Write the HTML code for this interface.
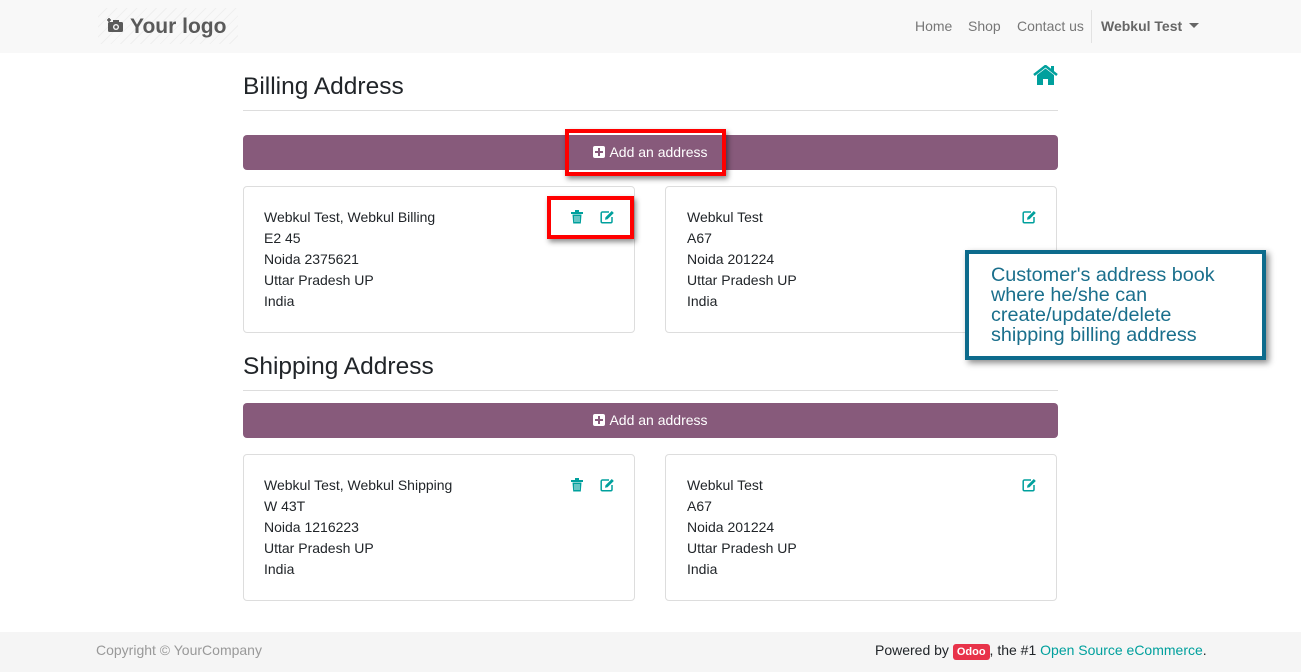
<!DOCTYPE html>
<html><head><meta charset="utf-8"><style>
*{box-sizing:border-box;margin:0;padding:0}
body{width:1301px;height:672px;background:#fff;font-family:"Liberation Sans",sans-serif;color:#212529;position:relative;overflow:hidden;font-size:14px}
.nav{position:absolute;left:0;top:0;width:1301px;height:53px;background:#f8f8f8}
.logo{position:absolute;left:98px;top:8px;width:140px;height:36px;background:repeating-linear-gradient(135deg,#f8f8f8 0 6px,#efefef 6px 7px)}
.logo span{position:absolute;left:32px;top:7px;font-size:21px;font-weight:bold;color:#5a5a5a}
.nav a{position:absolute;top:18px;font-size:14px;color:#777}
.sep{position:absolute;left:1091px;top:10px;width:1px;height:33px;background:#e2e2e2}
h2{position:absolute;left:243px;font-size:24.5px;font-weight:normal;color:#212529}
.hr{position:absolute;left:243px;width:815px;height:1px;background:#ddd}
.btn{position:absolute;left:243px;width:815px;height:35px;background:#875a7b;border-radius:4px;color:#fff;font-size:14px;text-align:center;line-height:35px}
.plus{display:inline-block;width:12px;height:12px;background:#fff;border-radius:2px;position:relative;vertical-align:-1px;margin-right:4px}
.plus:before{content:"";position:absolute;left:2px;top:5px;width:8px;height:2px;background:#875a7b}
.plus:after{content:"";position:absolute;left:5px;top:2px;width:2px;height:8px;background:#875a7b}
.card{position:absolute;width:392px;height:147px;border:1px solid #ddd;border-radius:4px;padding:20px 20px;line-height:21px;font-size:14px}
.ic{position:absolute;top:23px}
.red{position:absolute;border:4px solid #f00;box-shadow:2px 3px 5px rgba(0,0,0,.45)}
.note{position:absolute;left:965px;top:250px;width:301px;height:110px;border:4px solid #0d6b8c;background:#fff;box-shadow:3px 3px 6px rgba(0,0,0,.45);padding:11px 0 0 22px;color:#1a6f8c;font-size:19.8px;line-height:20px}
.note div{width:250px}
.foot{position:absolute;left:0;top:632px;width:1301px;height:40px;background:#f5f5f5}
</style></head><body>
<div class="nav">
<div class="logo"><svg style="position:absolute;left:8px;top:9px" width="18" height="16" viewBox="0 0 18 16"><path d="M3 1v4M1 3h4" stroke="#5a5a5a" stroke-width="1.6"/><rect x="2" y="5" width="15" height="10" rx="1.5" fill="#5a5a5a"/><rect x="7" y="3" width="6" height="3" fill="#5a5a5a"/><circle cx="10" cy="10" r="3" fill="#f8f8f8"/><circle cx="10" cy="10" r="1.6" fill="#5a5a5a"/></svg><span>Your logo</span></div>
<a style="left:915px">Home</a><a style="left:968px">Shop</a><a style="left:1017px">Contact us</a>
<div class="sep"></div>
<a style="left:1101px;font-weight:bold;color:#666">Webkul Test <span style="display:inline-block;border-left:5px solid transparent;border-right:5px solid transparent;border-top:5px solid #666;vertical-align:3px;margin-left:3px"></span></a>
</div>
<svg style="position:absolute;left:1033px;top:65px" width="25" height="20" viewBox="0 0 25 20"><path d="M1 10L12.5 1 24 10" stroke="#00a09d" stroke-width="2.5" fill="none"/><rect x="18" y="1" width="3" height="6" fill="#00a09d"/><path d="M4 10L12.5 3.5 21 10V20H15V14H10V20H4Z" fill="#00a09d"/></svg>
<h2 style="top:73px">Billing Address</h2>
<div class="hr" style="top:110px"></div>
<div class="btn" style="top:135px"><span class="plus"></span>Add an address</div>
<div class="red" style="left:565px;top:129px;width:161px;height:47px"></div>
<div class="card" style="left:243px;top:186px">Webkul Test, Webkul Billing<br>E2 45<br>Noida 2375621<br>Uttar Pradesh UP<br>India
<svg class="ic" style="left:327px" width="12" height="14" viewBox="0 0 12 14"><rect x="0" y="2" width="12" height="2" fill="#00a09d"/><rect x="4" y="0" width="4" height="2" fill="#00a09d"/><path d="M1.5 4.5h9l-.7 9h-7.6z" fill="#00a09d"/><path d="M4 6v6M6 6v6M8 6v6" stroke="#fff" stroke-width=".8"/></svg>
<svg class="ic" style="left:356px" width="15" height="14" viewBox="0 0 15 14"><path d="M9 2H2.5a1.3 1.3 0 0 0-1.3 1.3v8.2a1.3 1.3 0 0 0 1.3 1.3h8.2a1.3 1.3 0 0 0 1.3-1.3V7" stroke="#00a09d" stroke-width="1.5" fill="none"/><path d="M5 9.8l.5-2.5L11.8 1l2 2-6.3 6.3z" fill="#00a09d"/></svg></div>
<div class="red" style="left:547px;top:196px;width:87px;height:43px"></div>
<div class="card" style="left:665px;top:186px;padding-left:21px">Webkul Test<br>A67<br>Noida 201224<br>Uttar Pradesh UP<br>India
<svg class="ic" style="left:356px" width="15" height="14" viewBox="0 0 15 14"><path d="M9 2H2.5a1.3 1.3 0 0 0-1.3 1.3v8.2a1.3 1.3 0 0 0 1.3 1.3h8.2a1.3 1.3 0 0 0 1.3-1.3V7" stroke="#00a09d" stroke-width="1.5" fill="none"/><path d="M5 9.8l.5-2.5L11.8 1l2 2-6.3 6.3z" fill="#00a09d"/></svg></div>
<div class="note"><div>Customer's address book where he/she can create/update/delete shipping billing address</div></div>
<h2 style="top:353px">Shipping Address</h2>
<div class="hr" style="top:390px"></div>
<div class="btn" style="top:403px"><span class="plus"></span>Add an address</div>
<div class="card" style="left:243px;top:454px">Webkul Test, Webkul Shipping<br>W 43T<br>Noida 1216223<br>Uttar Pradesh UP<br>India
<svg class="ic" style="left:327px" width="12" height="14" viewBox="0 0 12 14"><rect x="0" y="2" width="12" height="2" fill="#00a09d"/><rect x="4" y="0" width="4" height="2" fill="#00a09d"/><path d="M1.5 4.5h9l-.7 9h-7.6z" fill="#00a09d"/><path d="M4 6v6M6 6v6M8 6v6" stroke="#fff" stroke-width=".8"/></svg>
<svg class="ic" style="left:356px" width="15" height="14" viewBox="0 0 15 14"><path d="M9 2H2.5a1.3 1.3 0 0 0-1.3 1.3v8.2a1.3 1.3 0 0 0 1.3 1.3h8.2a1.3 1.3 0 0 0 1.3-1.3V7" stroke="#00a09d" stroke-width="1.5" fill="none"/><path d="M5 9.8l.5-2.5L11.8 1l2 2-6.3 6.3z" fill="#00a09d"/></svg></div>
<div class="card" style="left:665px;top:454px;padding-left:21px">Webkul Test<br>A67<br>Noida 201224<br>Uttar Pradesh UP<br>India
<svg class="ic" style="left:356px" width="15" height="14" viewBox="0 0 15 14"><path d="M9 2H2.5a1.3 1.3 0 0 0-1.3 1.3v8.2a1.3 1.3 0 0 0 1.3 1.3h8.2a1.3 1.3 0 0 0 1.3-1.3V7" stroke="#00a09d" stroke-width="1.5" fill="none"/><path d="M5 9.8l.5-2.5L11.8 1l2 2-6.3 6.3z" fill="#00a09d"/></svg></div>
<div class="foot">
<span style="position:absolute;left:96px;top:10px;color:#999;font-size:14px">Copyright © YourCompany</span>
<span style="position:absolute;left:875px;top:10px;font-size:14px;color:#212529">Powered by <span style="background:#e8334a;color:#fff;font-weight:bold;font-size:11px;padding:2px 4px;border-radius:3px">Odoo</span>, the #1 <span style="color:#00a09d">Open Source eCommerce</span>.</span>
</div>
</body></html>
